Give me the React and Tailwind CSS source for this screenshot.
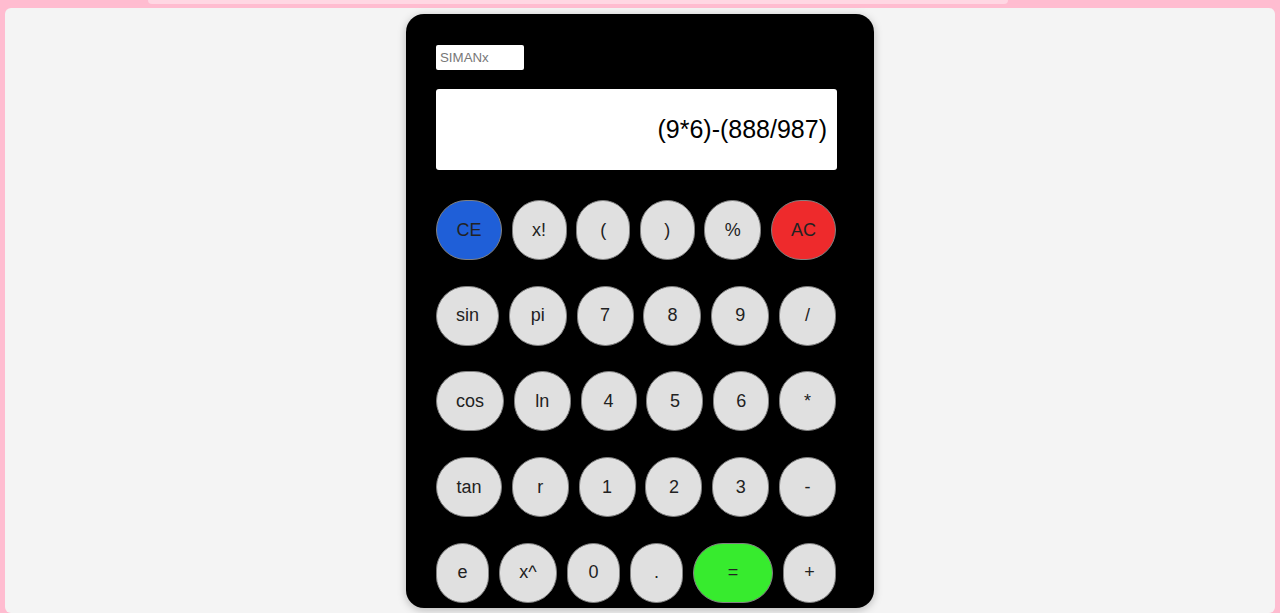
import React from 'react'

// rows of keys: [label, width, colour]
const ROWS = [
  [['CE', 66, 'bg-[#1f5fd8]'], ['x!', 55], ['(', 54], [')', 55], ['%', 57], ['AC', 65, 'bg-[#ee2a2c]']],
  [['sin', 63], ['pi', 58], ['7', 57], ['8', 58], ['9', 58], ['/', 57]],
  [['cos', 68], ['ln', 57], ['4', 56], ['5', 57], ['6', 56], ['*', 57]],
  [['tan', 66], ['r', 57], ['1', 57], ['2', 57], ['3', 57], ['-', 57]],
  [['e', 53], ['x^', 58], ['0', 53], ['.', 53], ['=', 80, 'bg-[#37eb2e]'], ['+', 53]],
]

function Key({ label, width, color }) {
  return (
    <button
      className={`h-[60px] rounded-full border border-[#808080] text-[18px] text-[#222] flex items-center justify-center ${color || 'bg-[#e0e0e0]'}`}
      style={{ width }}
    >
      {label}
    </button>
  )
}

export default function App() {
  return (
    <div className="h-screen bg-[#ffbcd0] overflow-hidden flex flex-col" style={{ fontFamily: '"Liberation Sans", Arial, sans-serif' }}>
      <div className="h-[4px] ml-[148px] mr-[272px] rounded-b-lg bg-[#ffd7e3]" />
      <div className="mt-[4px] mx-[5px] flex-1 rounded-md bg-[#f4f4f4] pt-[6px] flex justify-center">
        <div className="w-[468px] h-[594px] bg-black rounded-[18px] shadow-[0_2px_8px_rgba(0,0,0,0.25)] pt-[31px] pl-[30px]">
          <input
            defaultValue="SIMANx"
            className="block w-[88px] h-[25px] bg-white rounded-[2px] px-1 text-[13.3px] text-[#777] outline-none"
          />
          <div className="mt-[19px] w-[401px] h-[81px] bg-white rounded-[3px] flex items-center justify-end pr-[10px] text-[25px] text-black">
            (9*6)-(888/987)
          </div>
          <div className="mt-[30px] w-[400px] flex flex-col gap-[25.7px]">
            {ROWS.map((row, i) => (
              <div key={i} className="flex justify-between">
                {row.map(([label, w, c]) => (
                  <Key key={label} label={label} width={w} color={c} />
                ))}
              </div>
            ))}
          </div>
        </div>
      </div>
    </div>
  )
}
